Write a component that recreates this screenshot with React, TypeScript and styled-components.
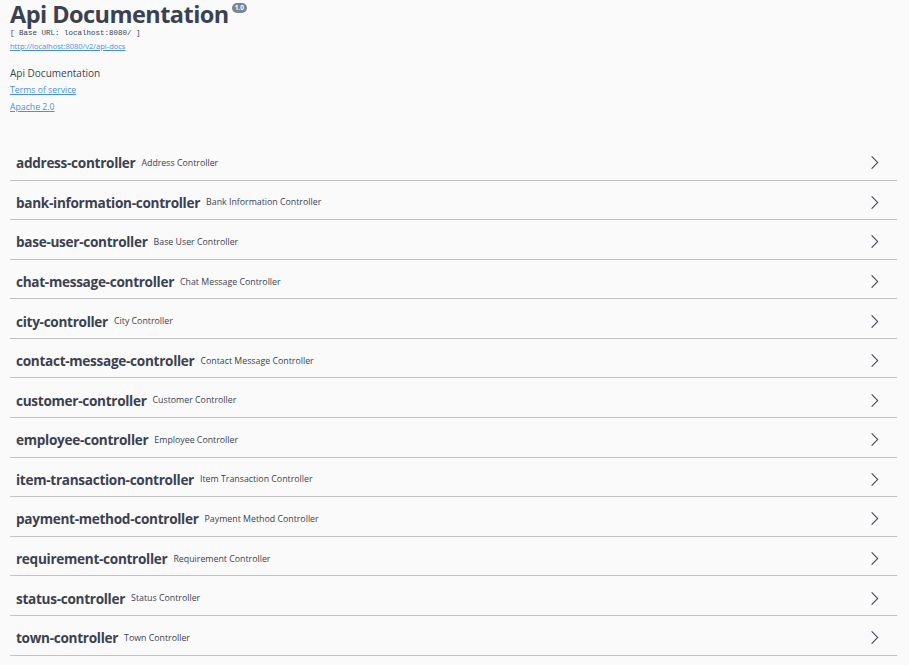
import React from "react";
import styled, { createGlobalStyle } from "styled-components";

const Global = createGlobalStyle`
  html, body { margin: 0; padding: 0; background: #fafafa; }
  body { font-family: "Open Sans", sans-serif; color: #3b4151; }
`;

const Page = styled.div`
  padding: 0 12px 0 10px;
  background: #fafafa;
  min-height: 665px;
  box-sizing: border-box;
`;

const Info = styled.div`
  display: flex;
  flex-direction: column;
  padding-bottom: 30px;
`;

const TitleRow = styled.div`
  display: flex;
  align-items: flex-start;
`;

const Title = styled.h2`
  margin: 0;
  font-family: "Open Sans", sans-serif;
  font-weight: 700;
  font-size: 23.5px;
  line-height: 28px;
  letter-spacing: -0.55px;
  color: #3b4151;
`;

const Version = styled.span`
  margin: 3px 0 0 3px;
  background: #7d8492;
  color: #fff;
  border-radius: 8px;
  font-size: 6.5px;
  font-weight: 700;
  line-height: 10px;
  padding: 0 3px;
  font-family: "Open Sans", sans-serif;
`;

const BaseUrl = styled.pre`
  margin: 0;
  font-family: "Liberation Mono", monospace;
  font-size: 7.5px;
  line-height: 11px;
  color: #3b4151;
`;

const SmallLink = styled.a`
  font-size: 7.5px;
  line-height: 14px;
  color: #4990e2;
  text-decoration: underline;
  align-self: flex-start;
`;

const Desc = styled.div`
  margin-top: 12px;
  font-size: 10px;
  line-height: 17px;
`;

const InfoLink = styled.a`
  font-size: 8.7px;
  line-height: 17px;
  color: #4990e2;
  text-decoration: underline;
  align-self: flex-start;
`;

const Tags = styled.div`
  display: flex;
  flex-direction: column;
`;

const Row = styled.div`
  display: flex;
  align-items: center;
  height: 34.58px;
  box-sizing: border-box;
  margin-bottom: 5px;
  padding: 0 15px 0 6px;
  border-bottom: 1px solid rgba(59, 65, 81, 0.3);
`;

const TagName = styled.span`
  font-family: "Open Sans", sans-serif;
  font-weight: 700;
  font-size: 13.6px;
  letter-spacing: -0.3px;
  color: #3b4151;
`;

const TagDesc = styled.small`
  flex: 1;
  margin-left: 6px;
  font-size: 8.8px;
  color: #3b4151;
  font-family: "Open Sans", sans-serif;
`;

const Arrow = () => (
  <svg width="15" height="15" viewBox="0 0 20 20" fill="#3b4151">
    <path d="M13.25 10L6.109 2.58a.697.697 0 0 1 0-.979.68.68 0 0 1 .969 0l7.83 7.908a.697.697 0 0 1 0 .979l-7.83 7.908a.68.68 0 0 1-.969 0 .697.697 0 0 1 0-.979L13.25 10z" />
  </svg>
);

const tags: [string, string][] = [
  ["address-controller", "Address Controller"],
  ["bank-information-controller", "Bank Information Controller"],
  ["base-user-controller", "Base User Controller"],
  ["chat-message-controller", "Chat Message Controller"],
  ["city-controller", "City Controller"],
  ["contact-message-controller", "Contact Message Controller"],
  ["customer-controller", "Customer Controller"],
  ["employee-controller", "Employee Controller"],
  ["item-transaction-controller", "Item Transaction Controller"],
  ["payment-method-controller", "Payment Method Controller"],
  ["requirement-controller", "Requirement Controller"],
  ["status-controller", "Status Controller"],
  ["town-controller", "Town Controller"],
];

export default function App() {
  return (
    <>
      <Global />
      <Page>
        <Info>
          <TitleRow>
            <Title>Api Documentation</Title>
            <Version>1.0</Version>
          </TitleRow>
          <BaseUrl>[ Base URL: localhost:8080/ ]</BaseUrl>
          <SmallLink href="#">http://localhost:8080/v2/api-docs</SmallLink>
          <Desc>Api Documentation</Desc>
          <InfoLink href="#">Terms of service</InfoLink>
          <InfoLink href="#">Apache 2.0</InfoLink>
        </Info>
        <Tags>
          {tags.map(([n, d]) => (
            <Row key={n}>
              <TagName>{n}</TagName>
              <TagDesc>{d}</TagDesc>
              <Arrow />
            </Row>
          ))}
        </Tags>
      </Page>
    </>
  );
}
